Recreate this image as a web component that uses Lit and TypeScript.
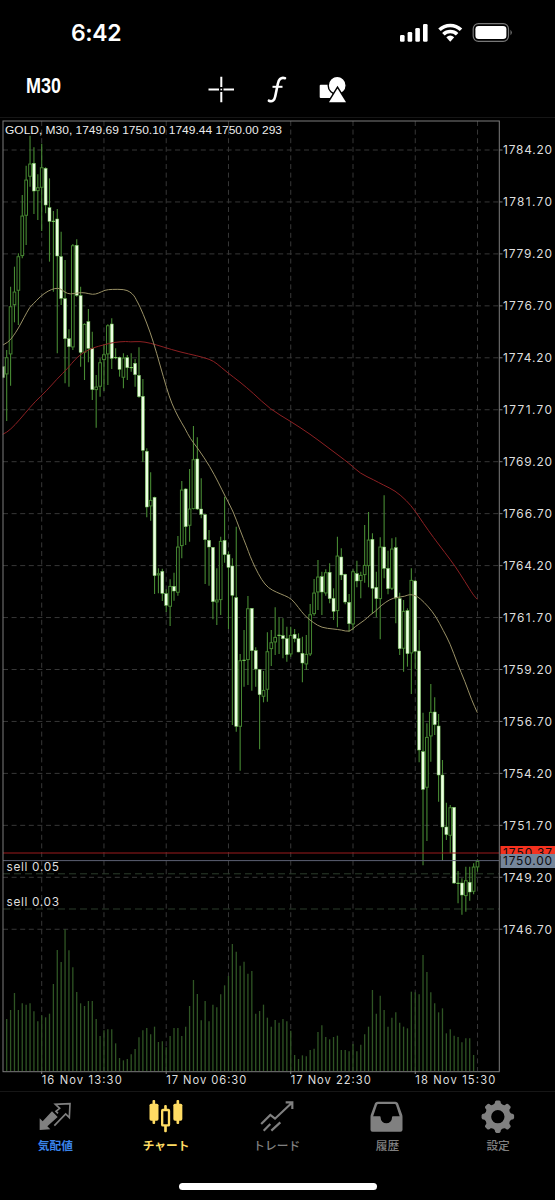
import { LitElement, html, svg, css } from "lit";
import { customElement } from "lit/decorators.js";

type Pt = [number, number];
// kind, high, bodyTop, bodyBottom, low; measured in thirds of a pixel from `base`
type Candle = [string, number, number, number, number];

const X0 = 2.8;
const PITCH = 3.891;
const barX = (i: number) => X0 + PITCH * i;

const CANDLE_RUNS: { base: number; rows: Candle[] }[] = [
  { base: 115, rows: [
    ["f",755,755,788,790],["h",705,727,778,918],["h",515,574,718,812],["h",455,530,570,622],["h",415,424,527,630],
    ["h",240,302,423,430],["h",152,194,302,390],["h",62,146,185,215],["f",97,145,228,297],["h",178,217,228,315],
    ["h",86,157,218,348],["f",157,160,270,295],["f",190,278,319,440],["d",288,318,320,530],["f",282,312,423,715],
    ["f",350,425,550,570],["f",435,551,671,805],["f",643,671,695,815],["h",387,391,697,705],["f",373,391,541,545],
    ["f",515,542,712,755],["h",625,627,713,795],["f",582,620,700,742],["f",650,700,824,855],["h",780,815,825,938],
    ["h",730,742,815,845],["h",688,718,735,828],["h",628,631,718,810],["f",610,627,730,762],["d",700,727,729,733],
    ["f",725,727,763,785],["h",715,728,788,820],["f",720,728,758,795],["d",715,757,759,770],["f",732,745,779,815],
  ]},
  { base: 300, rows: [
    ["f",142,226,290,293],["f",237,289,451,486],["f",445,454,621,652],["h",517,600,619,662],["f",590,592,827,882],
    ["h",805,820,826,880],["f",806,814,880,903],["f",868,881,916,936],
  ]},
  { base: 480, rows: [
    ["h",298,318,380,438],["f",278,319,333,362],["h",168,200,338,347],["h",3,29,198,235],["f",25,27,140,195],
    ["h",-33,86,137,185],["h",-162,-62,87,88],["f",-128,-63,87,90],["f",-5,87,103,115],["f",103,104,179,312],
    ["f",150,181,201,317],["f",201,202,365,418],["h",265,359,367,435],["h",170,183,360,405],["f",50,181,224,248],
    ["f",215,224,262,447],["f",235,258,346,735],["f",140,353,739,755],["h",522,541,740,872],["d",450,540,542,620],
    ["h",348,385,540,615],["f",384,385,512,632],["f",502,512,567,620],["f",567,568,644,808],["h",573,630,650,667],
    ["h",457,514,629,665],["h",450,487,507,558],["h",382,471,487,525],["d",412,465,468,522],["f",415,467,476,535],
    ["f",440,476,524,545],["h",440,465,523,530],["f",447,463,476,487],["f",460,476,516,517],["f",470,520,549,607],
    ["h",465,522,553,570],["h",372,403,523,528],["h",297,338,402,407],["h",240,290,337,390],["f",275,290,336,405],
    ["h",268,277,340,347],["f",250,277,356,370],["f",325,355,394,420],["h",170,227,393,442],["f",205,231,285,300],
    ["f",281,283,366,373],["f",342,367,431,455],["h",268,274,433,450],["f",242,281,303,322],["h",275,285,303,355],
    ["h",135,255,285,308],["h",96,179,258,322],["f",160,178,325,402],["f",275,322,356,412],["h",172,200,357,478],
    ["f",46,201,265,295],["f",212,265,326,343],["h",175,206,326,330],["f",172,203,354,430],["f",338,356,506,525],
    ["h",360,393,506,575],["f",385,392,521,560],["h",265,300,520,642],["f",300,303,514,568],["f",450,513,810,847],
  ]},
  { base: 690, rows: [
    ["f",68,185,298,526],["h",100,141,293,453],["h",-18,66,139,215],["f",22,66,104,135],["f",72,108,255,335],
    ["f",210,255,411,512],["f",338,411,434,450],["h",345,352,437,490],["f",352,352,579,582],["d",543,579,581,640],
    ["f",565,579,615,674],["h",530,571,618,665],["f",530,577,606,632],["h",520,530,605,613],["h",508,513,532,545],
  ]},
];

const CANDLES = CANDLE_RUNS.flatMap(({ base, rows }) =>
  rows.map(([kind, ...v]) => {
    const [hi, top, bottom, lo] = v.map((n) => base + (n as number) / 3);
    return { kind, hi, top, bottom, lo };
  })
);

const VOLUMES_A = [537,510,459,510,490,494,490,514,544,526,532,521,432,330,366,268,331,382,456,490,498,483,483,537,588,571,568,568,610,654,661,657,643,627,592,571,564,583,560,606,604,622,588,564,564,588,560,498,420,462,541,483,544,494,502,463,436,408,312,335]
  .map((v) => 840 + v / 3);
const VOLUMES_B = [197,185,221,213,341,333,314,353,380,360,368,357,364,392,465,477,466,469,450,446,396,376,411,418,411,407,450,450,454,432,454,434,403,380,270,341,287,330,380,353,337,368,380,385,275,277,283,165,216,277,310,337,325,400,388,407,411,427,415,415,465]
  .map((v) => 900 + v / 3);
const VOLUMES = [...VOLUMES_A, ...VOLUMES_B];

const scale = (ox: number, oy: number, pts: Pt[]): Pt[] => pts.map(([x, y]) => [ox + x / 3, oy + y / 3]);

const FAST_MA: Pt[] = [
  ...scale(0, 115, [[9,690],[25,682],[40,663],[55,640],[72,608],[90,575],[100,567],[120,545],[145,527],[165,520],[180,520],[195,532],[210,538],[235,533],[255,533],[278,539],[295,535],[315,525],[335,523],[372,523],[390,530],[403,543]]),
  ...scale(130, 300, [[18,-2],[30,20],[50,68],[70,125],[90,195],[110,265],[125,310],[145,352],[165,385],[180,415],[205,447],[240,500],[265,547],[285,588],[310,635],[330,690],[350,740]]),
  ...scale(250, 480, [[0,228],[15,262],[35,300],[55,324],[80,337],[105,347],[125,357],[145,382],[165,408],[190,428],[215,443],[250,447],[275,450],[298,456],[315,440],[345,420]]),
  ...scale(370, 480, [[0,405],[15,395],[35,375],[60,358],[80,352],[105,349],[118,343],[135,346],[150,355],[175,380],[198,410],[220,452],[240,490],[262,550],[285,605],[305,660],[322,698]]),
];
const SLOW_MA: Pt[] = [
  ...scale(0, 115, [[8,958],[20,953],[45,930],[75,895],[105,860],[140,827],[170,793],[205,758],[225,733],[250,712],[280,698],[310,690],[340,682],[380,679]]),
  ...scale(130, 300, [[0,126],[30,124],[60,129],[100,141],[150,156],[200,167],[240,178],[260,190],[290,216],[330,246],[370,280],[420,327]]),
  [290, 421], [310, 434], [330, 449], [350, 464],
  ...scale(370, 480, [[-30,-20],[12,0],[40,15],[75,32],[110,62],[135,92],[160,130],[190,172],[225,218],[255,258],[285,305],[310,345],[322,358]]),
];

// Rounds the corners of a polyline by curving between segment midpoints.
const smooth = (p: Pt[]) => {
  const f = (n: number) => n.toFixed(2);
  let d = `M${f(p[0][0])} ${f(p[0][1])}`;
  for (let i = 1; i < p.length - 1; i++) {
    const [x, y] = p[i];
    const [nx, ny] = p[i + 1];
    d += `Q${f(x)} ${f(y)} ${f((x + nx) / 2)} ${f((y + ny) / 2)}`;
  }
  const last = p[p.length - 1];
  return d + `L${f(last[0])} ${f(last[1])}`;
};

const PRICES = Array.from({ length: 16 }, (_, k) => ({ y: 150 + k * 51.95, label: (1784.2 - 2.5 * k).toFixed(2) }));
const TIME_LINES = Array.from({ length: 8 }, (_, k) => 41.7 + k * 62.26);
const TIMES = ["16 Nov 13:30", "17 Nov 06:30", "17 Nov 22:30", "18 Nov 15:30"];

@customElement("price-chart")
export class PriceChart extends LitElement {
  static styles = css`
    :host { display: block; }
    svg { display: block; }
    text { font-family: Inter, "Liberation Sans", sans-serif; font-size: 11.9px; fill: #dedede; }
    .time { font-size: 11.2px; }
    .sell { font-size: 11.8px; }
    .title { font-family: "Liberation Sans", sans-serif; font-size: 11.6px; fill: #ececec; }
    .grid { stroke: #373737; stroke-width: 1; stroke-dasharray: 5 3.6; fill: none; }
    .order { stroke: #2b3d2b; stroke-width: 1; stroke-dasharray: 7 4; }
    .frame { stroke: #7c7c7c; stroke-width: 1; fill: none; }
    .wick { stroke: #478a33; stroke-width: 1.1; }
    .full { fill: #ecffe2; stroke: #6fbf55; stroke-width: 0.5; }
    .hollow { fill: #000; stroke: #458631; stroke-width: 1; }
    .doji { stroke: #86e066; stroke-width: 1; }
    .vol { stroke: #2f5524; stroke-width: 1.3; }
    .fast { stroke: #9a9166; stroke-width: 1; fill: none; }
    .slow { stroke: #8d2023; stroke-width: 1; fill: none; }
    .ask { stroke: #9c1a1c; }
    .bid { stroke: #5c6173; }
    .tag { fill: #0c0c10; }
  `;

  render() {
    return html`
      <svg width="555" height="973" viewBox="0 118 555 973">
        ${PRICES.map((p) => svg`<line class="grid" x1="3" x2="499" y1=${p.y} y2=${p.y}></line>`)}
        ${TIME_LINES.map((x) => svg`<line class="grid" x1=${x} x2=${x} y1="121" y2="1071"></line>`)}
        <line class="order" x1="3" x2="499" y1="873.8" y2="873.8"></line>
        <line class="order" x1="3" x2="499" y1="909" y2="909"></line>
        ${VOLUMES.map((y, k) => svg`<line class="vol" x1=${barX(k + 1)} x2=${barX(k + 1)} y1=${y} y2="1071"></line>`)}
        ${CANDLES.map((c, i) => this.candle(c, barX(i)))}
        <path class="slow" d=${smooth(SLOW_MA)}></path>
        <path class="fast" d=${smooth(FAST_MA)}></path>
        <line class="ask" x1="3" x2="499" y1="853" y2="853"></line>
        <line class="bid" x1="3" x2="499" y1="860.6" y2="860.6"></line>
        <rect x="0" y="350" width="2.6" height="40" fill="#000"></rect>
        <rect class="frame" x="3" y="121" width="496.3" height="950.7"></rect>
        ${PRICES.map((p) => svg`
          <line class="frame" x1="499" x2="502.5" y1=${p.y} y2=${p.y}></line>
          <text x="503" y=${p.y + 4.3} textLength="49">${p.label}</text>`)}
        <rect x="500.5" y="846" width="55" height="10" fill="#f5321f"></rect>
        <text class="tag" x="503" y="857.3" textLength="49">1750.37</text>
        <rect x="500.5" y="854" width="55" height="14" fill="#75869b"></rect>
        <text class="tag" x="503" y="865.2" textLength="49">1750.00</text>
        ${TIMES.map((t, k) => svg`
          <line class="frame" x1=${41.7 + k * 124.52} x2=${41.7 + k * 124.52} y1="1071" y2="1074"></line>
          <text class="time" x=${41.7 + k * 124.52} y="1084.2" textLength="80">${t}</text>`)}
        <text class="sell" x="6.5" y="871" textLength="52.5">sell 0.05</text>
        <text class="sell" x="6.5" y="906" textLength="52.5">sell 0.03</text>
        <text class="title" x="5" y="134.4" textLength="277" lengthAdjust="spacingAndGlyphs">GOLD, M30, 1749.69 1750.10 1749.44 1750.00 293</text>
      </svg>`;
  }

  private candle(c: { kind: string; hi: number; top: number; bottom: number; lo: number }, x: number) {
    const h = c.bottom - c.top;
    const wick = svg`<line class="wick" x1=${x} x2=${x} y1=${c.hi} y2=${c.lo}></line>`;
    if (c.kind === "d")
      return svg`${wick}<line class="doji" x1=${x - 1.7} x2=${x + 1.7} y1=${c.top + 0.3} y2=${c.top + 0.3}></line>`;
    if (c.kind === "f")
      return svg`${wick}<rect class="full" x=${x - 1.5} y=${c.top} width="3" height=${h}></rect>`;
    return svg`${wick}<rect class="hollow" x=${x - 1.35} y=${c.top + 0.4} width="2.7" height=${Math.max(h - 0.8, 1)}></rect>`;
  }
}

const gearPath = () => {
  const out: string[] = [];
  for (let k = 0; k < 8; k++) {
    const at = (deg: number, r: number) => {
      const a = ((k * 45 + deg - 90) * Math.PI) / 180;
      return `${(59.5 + r * Math.cos(a)).toFixed(1)} ${(59 + r * Math.sin(a)).toFixed(1)}`;
    };
    out.push(`${k ? "L" : "M"}${at(-13, 41)} Q${at(-11, 49)} ${at(-5, 49)} L${at(5, 49)} Q${at(11, 49)} ${at(13, 41)} Q${at(22.5, 36)} ${at(32, 41)}`);
  }
  return out.join(" ") + "Z M39.5 59 a20 20 0 1 0 40 0 a20 20 0 1 0 -40 0Z";
};

const TABS = [
  { label: "気配値", cls: "quotes", icon: svg`
    <path d="M14 99V64L23 73L51 43L68 60L37 88L46 97Z" fill="currentColor"></path>
    <path d="M58 86L92 51L103 62L105 20L61 22L74 34L63 43L69 49" fill="none" stroke="currentColor" stroke-width="5"></path>` },
  { label: "チャート", cls: "active", icon: svg`
    <g fill="currentColor"><rect x="10.5" y="20" width="27" height="51" rx="5"></rect><rect x="19.5" y="9" width="8" height="72" rx="3"></rect>
    <rect x="82" y="20" width="27" height="51" rx="5"></rect><rect x="91.5" y="9" width="8" height="72" rx="3"></rect>
    <rect x="54.5" y="24" width="8" height="16" rx="3"></rect><rect x="54.5" y="84" width="8" height="22" rx="3"></rect></g>
    <rect x="48.5" y="39" width="20.5" height="46" rx="2" fill="none" stroke="currentColor" stroke-width="7"></rect>` },
  { label: "トレード", cls: "", icon: svg`
    <path d="M12.5 81L40 54L54 65L104 18M86 16H106V36M20 101L40 81M43 101L70 76" fill="none" stroke="currentColor" stroke-width="6.5"></path>` },
  { label: "履歴", cls: "", icon: svg`
    <path fill="currentColor" fill-rule="evenodd" d="M32 14H85Q91 14 93 19L105 52Q106.5 56 106.5 60V98Q106.5 104 100.5 104H16.5Q10.5 104 10.5 98V60Q10.5 56 12 52L24 19Q26 14 32 14ZM34 21Q31 21 30 24L18.5 58H38C40 58 41 60 41 62A17 17 0 0 0 75 62C75 60 76 58 78 58H98L87 24Q86 21 83 21Z"></path>` },
  { label: "設定", cls: "", icon: svg`<path fill="currentColor" fill-rule="evenodd" d=${gearPath()}></path>` },
];

@customElement("app-root")
export class AppRoot extends LitElement {
  static styles = css`
    :host { display: flex; flex-direction: column; width: 555px; height: 1200px; overflow: hidden; background: #000; color: #fff; font-family: Inter, "Noto Sans CJK JP", sans-serif; }
    svg { display: block; }
    .status { height: 66px; box-sizing: border-box; padding: 0 42px 0 71px; display: flex; align-items: center; justify-content: space-between; }
    .time { font-size: 23px; font-weight: 600; line-height: 28px; letter-spacing: -0.35px; }
    .tools { height: 51px; border-bottom: 1px solid #161616; display: flex; padding-left: 26px; }
    .frameName { font-family: "Liberation Sans", sans-serif; font-weight: 700; font-size: 21.5px; fill: #fff; }
    .tabs { height: 79px; box-sizing: border-box; border-top: 1px solid #161616; padding: 5px 1px 0 0; display: grid; grid-template-columns: repeat(5, 110.7px); color: #808080; }
    .tab { display: flex; flex-direction: column; align-items: center; font-family: "Noto Sans CJK JP", sans-serif; font-size: 11.7px; line-height: 18px; font-weight: 500; gap: 3px; }
    .quotes .label { color: #3a84ea; font-weight: 700; }
    .active .label { font-weight: 700; }
    .active { color: #ffdc63; }
    .home { width: 198px; height: 7px; border-radius: 4px; background: #fff; margin: 13px auto 0; }
  `;

  render() {
    return html`
      <div class="status">
        <span class="time">6:42</span>
        <svg width="114" height="22" viewBox="399 22 114 22">
          <g fill="#fff"><rect x="400" y="35" width="4.6" height="6.7" rx="1.3"></rect><rect x="407.6" y="32" width="4.6" height="9.7" rx="1.3"></rect><rect x="415.3" y="28" width="4.6" height="13.7" rx="1.3"></rect><rect x="423" y="24" width="4.6" height="17.7" rx="1.3"></rect></g>
          <g fill="none" stroke="#fff" stroke-width="3.6"><path d="M439.5 29.800a15.5 15.5 0 0 1 21.5 0"></path><path d="M443.4 34.300a9.8 9.8 0 0 1 13.7 0"></path></g>
          <path d="M446.3 37.300a6 6 0 0 1 7.9 0L450.250 41.700Z" fill="#fff"></path>
          <rect x="473.2" y="23.6" width="35.3" height="17.8" rx="5.3" fill="none" stroke="#777" stroke-width="1.2"></rect>
          <rect x="475.4" y="26" width="31" height="13" rx="3.3" fill="#fff"></rect>
          <path d="M510.5 29.700q2.600 2.800 0 5.600Z" fill="#777"></path>
        </svg>
      </div>
      <div class="tools">
        <svg width="340" height="51" viewBox="26 66 340 51">
          <text class="frameName" x="26" y="93.2" textLength="35" lengthAdjust="spacingAndGlyphs">M30</text>
          <path d="M208.5 89.500h10.500M223.500 89.500h10.500M221.300 76.800v10.300M221.300 92v10.300" stroke="#fff" stroke-width="2"></path>
          <rect x="220.5" y="88.7" width="1.6" height="1.6" fill="#fff"></rect>
          <path d="M285 78.200C280.500 76.800 278.600 80 277.900 83.500L275.200 96.500C274.500 100 272.500 102.200 268.900 100.700" fill="none" stroke="#fff" stroke-width="2.6" stroke-linecap="round"></path>
          <path d="M272.500 86.800h10" stroke="#fff" stroke-width="2"></path>
          <rect x="319.7" y="84.7" width="13" height="13.3" rx="1" fill="#fff"></rect>
          <circle cx="337.2" cy="85.4" r="9" fill="#fff" stroke="#000" stroke-width="1.4"></circle>
          <path d="M337.500 88.500L346 102.200H329Z" fill="#fff" stroke="#000" stroke-width="3" paint-order="stroke"></path>
        </svg>
      </div>
      <price-chart></price-chart>
      <div class="tabs">
        ${TABS.map((t) => html`
          <div class="tab ${t.cls}">
            <svg width="40" height="36" viewBox="0 0 120 108">${t.icon}</svg>
            <span class="label">${t.label}</span>
          </div>`)}
      </div>
      <div class="home"></div>`;
  }
}
